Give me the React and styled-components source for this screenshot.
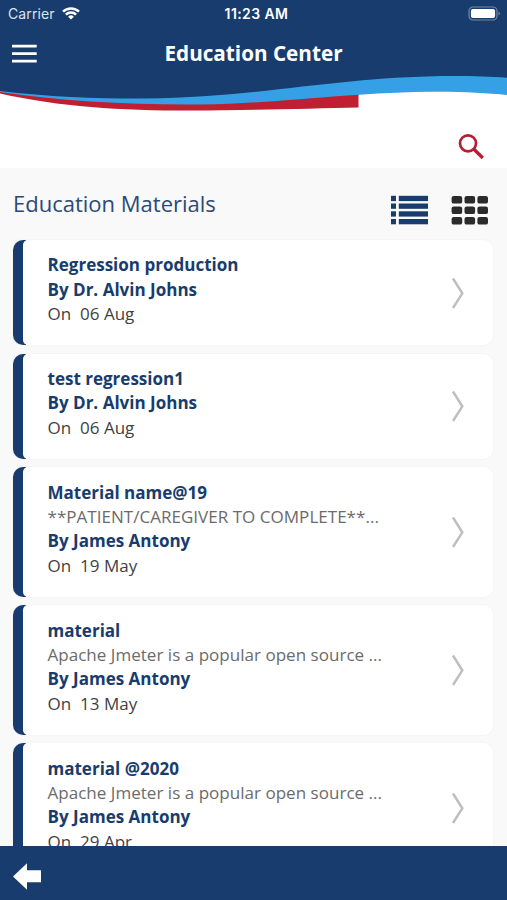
import React from "react";
import styled, { createGlobalStyle } from "styled-components";

const NAVY = "#183c6d";

const GlobalStyle = createGlobalStyle`
  * { box-sizing: border-box; }
  body { margin: 0; background: #fff; font-family: "Open Sans", sans-serif; }
`;

const Screen = styled.div`
  display: flex;
  flex-direction: column;
  width: 507px;
  height: 900px;
  overflow: hidden;
  background: #f9f9f9;
`;

const Header = styled.header`
  flex: none;
  height: 168px;
  background: #fff;
`;

const StatusBar = styled.div`
  display: grid;
  grid-template-columns: 1fr auto 1fr;
  align-items: center;
  height: 27px;
  padding: 0 6px 0 8px;
  background: ${NAVY};
  color: #fff;
  font: 14px/27px Inter, sans-serif;
`;

const Carrier = styled.div`
  display: flex;
  align-items: center;
  gap: 7px;
  color: #dce3ec;
  letter-spacing: 0.1px;
`;

const Clock = styled.div`
  font-size: 14px;
  font-weight: 600;
  letter-spacing: 0.4px;
  padding-left: 4px;
`;

const BatterySlot = styled.div`
  display: flex;
  justify-content: flex-end;
`;

const TitleBar = styled.div`
  display: grid;
  grid-template-columns: 60px 1fr 60px;
  align-items: center;
  height: 43px;
  padding-top: 8px;
  background: ${NAVY};
`;

const IconButton = styled.button`
  display: flex;
  padding: 0;
  border: 0;
  background: none;
  cursor: pointer;
`;

const MenuButton = styled(IconButton)`
  padding: 2px 0 0 12px;
`;

const Title = styled.h1`
  margin: 0;
  color: #fff;
  font-size: 20.7px;
  line-height: 28px;
  font-weight: 700;
  text-align: center;
  white-space: nowrap;
`;

const Wave = styled.svg`
  display: block;
`;

const SearchRow = styled.div`
  display: flex;
  justify-content: flex-end;
  padding: 20px 22px 0 0;
`;

const Content = styled.main`
  flex: 1;
  min-height: 0;
  overflow: hidden;
  padding: 0 14px 0 13px;
`;

const Toolbar = styled.div`
  display: flex;
  align-items: flex-start;
  height: 72px;
  padding-top: 20px;
`;

const Heading = styled.h2`
  flex: 1;
  margin: 0;
  color: #2b4a77;
  font-size: 22px;
  line-height: 30px;
  font-weight: 400;
`;

const ViewSwitch = styled.div`
  display: flex;
  gap: 23px;
  padding: 7px 4px 0 0;
`;

const List = styled.div`
  display: flex;
  flex-direction: column;
  gap: 8.6px;
`;

const Card = styled.article`
  display: flex;
  align-items: center;
  flex: none;
  height: ${(p) => (p.$tall ? 129.4 : 105)}px;
  border-radius: 10px;
  background: linear-gradient(90deg, ${NAVY} 13px, #fff 13px);
  box-shadow: 0 0 2px rgba(0, 0, 0, 0.07);
`;

const CardBody = styled.div`
  display: flex;
  align-items: center;
  flex: 1;
  height: 100%;
  margin-left: 10px;
  padding: 0 28px 0 24.5px;
  border-radius: 5px 10px 10px 5px;
  background: #fff;
`;

const CardText = styled.div`
  flex: 1;
  padding-bottom: 5px;
  font-size: 17.03px;
  line-height: 24.4px;
  white-space: pre;
`;

const Strong = styled.div`
  color: ${NAVY};
  font-weight: 700;
`;

const Summary = styled.div`
  color: #6b6b6b;
  letter-spacing: 0.02px;
`;

const DateLine = styled.div`
  color: #3f3f3f;
`;

const Footer = styled.footer`
  display: flex;
  align-items: center;
  flex: none;
  height: 54px;
  padding: 6px 0 0 13px;
  background: ${NAVY};
`;

const Chevron = () => (
  <svg width="14" height="32" viewBox="0 0 14 32" fill="none" stroke="#bfbfbf" strokeWidth="2.5">
    <path d="M2 1.5 11.3 16.3 2 31" />
  </svg>
);

const WifiIcon = () => (
  <svg width="18" height="13" viewBox="0 0 18 13" fill="none" stroke="#fff" strokeWidth="2.5">
    <path d="M1 4.7a11.4 11.4 0 0 1 16 0M3.9 7.7a7.2 7.2 0 0 1 10.2 0" />
    <path d="M9 12.6 6.1 9.8a4.1 4.1 0 0 1 5.8 0z" fill="#fff" stroke="none" />
  </svg>
);

const BatteryIcon = () => (
  <svg width="33" height="15" viewBox="0 0 33 15">
    <rect x="1" y="1" width="28" height="13" rx="4" fill="none" stroke="#7388a5" strokeWidth="1.2" />
    <rect x="2.9" y="2.9" width="24.2" height="9.2" rx="2" fill="#fff" />
    <path d="M30.5 5.4q3 2.1 0 4.2z" fill="#7388a5" />
  </svg>
);

const MenuIcon = () => (
  <svg width="25" height="20" viewBox="0 0 25 20" fill="#fff">
    <path d="M0 .8h24.7v2.6H0zM0 8.3h24.7v2.6H0zM0 15.8h24.7v2.6H0z" />
  </svg>
);

const SearchIcon = () => (
  <svg width="27" height="27" viewBox="0 0 27 27" fill="none" stroke="#b81f31">
    <circle cx="10" cy="10.3" r="8" strokeWidth="2.7" />
    <path d="M15.7 16 24.8 25" strokeWidth="3.3" />
  </svg>
);

const ListIcon = () => (
  <svg width="37" height="30" viewBox="0 0 37 30" fill={NAVY}>
    {[0.8, 8.5, 16.3, 24].map((y) => (
      <g key={y}>
        <rect x="0" y={y} width="5" height="5.3" />
        <rect x="7.8" y={y} width="29.2" height="5.3" />
      </g>
    ))}
  </svg>
);

const GridIcon = () => (
  <svg width="38" height="30" viewBox="0 0 38 30" fill="#2b2b2b">
    {[0.9, 11.4, 21.9].map((y) =>
      [0.6, 13.5, 26.4].map((x) => <rect key={`${x}-${y}`} x={x} y={y} width="10.6" height="7.7" rx="2.2" />)
    )}
  </svg>
);

const BackIcon = () => (
  <svg width="28" height="27" viewBox="0 0 28 27" fill="#fff">
    <path d="M0 13.5 14 .2v7.1h14v12H14v7.5z" />
  </svg>
);

const materials = [
  { title: "Regression production", author: "Dr. Alvin Johns", date: "06 Aug" },
  { title: "test regression1", author: "Dr. Alvin Johns", date: "06 Aug" },
  { title: "Material name@19", summary: "**PATIENT/CAREGIVER TO COMPLETE**...", author: "James Antony", date: "19 May" },
  { title: "material", summary: "Apache Jmeter is a popular open source ...", author: "James Antony", date: "13 May" },
  { title: "material @2020", summary: "Apache Jmeter is a popular open source ...", author: "James Antony", date: "29 Apr" },
];

export default function App() {
  return (
    <>
      <GlobalStyle />
      <Screen>
        <Header>
          <StatusBar>
            <Carrier>Carrier <WifiIcon /></Carrier>
            <Clock>11:23 AM</Clock>
            <BatterySlot><BatteryIcon /></BatterySlot>
          </StatusBar>
          <TitleBar>
            <MenuButton aria-label="Menu"><MenuIcon /></MenuButton>
            <Title>Education Center</Title>
          </TitleBar>
          <Wave width="507" height="43" viewBox="0 70 507 43">
            <path d="M0 88V93.5C60 107 120 110.6 190 110.6C250 110.4 310 108.5 358.5 107.5V90Z" fill="#c01f31" />
            <path d="M0 85V92C60 101 130 105 200 104.5C290 103 350 91.7 440 91.7C465 91.7 488 93 507 95V70Z" fill="#35a0e5" />
            <path d="M0 69V91C50 97 100 98.7 145 98.5C265 97 340 76 455 76C475 76 490 76.5 507 77.7V69Z" fill={NAVY} />
          </Wave>
          <SearchRow>
            <IconButton aria-label="Search"><SearchIcon /></IconButton>
          </SearchRow>
        </Header>
        <Content>
          <Toolbar>
            <Heading>Education Materials</Heading>
            <ViewSwitch>
              <IconButton aria-label="List view"><ListIcon /></IconButton>
              <IconButton aria-label="Grid view"><GridIcon /></IconButton>
            </ViewSwitch>
          </Toolbar>
          <List>
            {materials.map((m) => (
              <Card key={m.title} $tall={!!m.summary}>
                <CardBody>
                  <CardText>
                    <Strong>{m.title}</Strong>
                    {m.summary && <Summary>{m.summary}</Summary>}
                    <Strong>By {m.author}</Strong>
                    <DateLine>{`On  ${m.date}`}</DateLine>
                  </CardText>
                  <Chevron />
                </CardBody>
              </Card>
            ))}
          </List>
        </Content>
        <Footer>
          <IconButton aria-label="Back"><BackIcon /></IconButton>
        </Footer>
      </Screen>
    </>
  );
}
